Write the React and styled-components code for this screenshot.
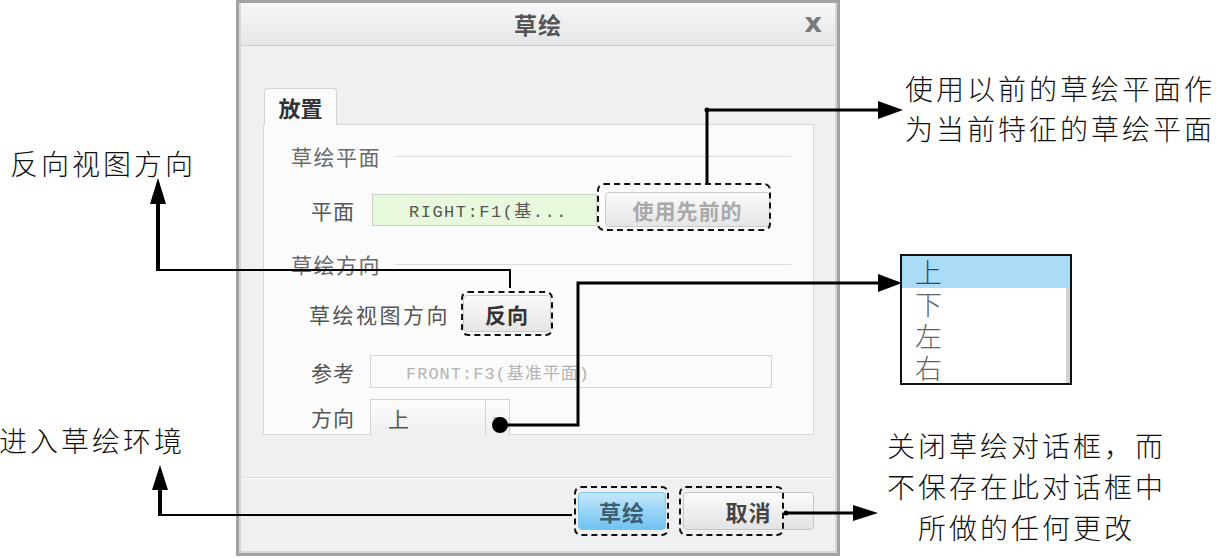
import React from 'react'
import styled, { createGlobalStyle } from 'styled-components'

const Global = createGlobalStyle`
  html, body {
    margin: 0;
    padding: 0;
    background: #ffffff;
  }
  #root {
    width: 1216px;
    height: 558px;
    overflow: hidden;
  }
`

const SANS = `"Noto Sans CJK SC", "Noto Sans", sans-serif`
const MONO = `"Liberation Mono", "Noto Sans CJK SC", monospace`

export default function App() {
  return (
    <>
      <Global />
      <Canvas>
        <Dialog>
          <TitleBar>
            <span />
            <Title>草绘</Title>
            <Close>x</Close>
          </TitleBar>
          <Body>
            <Tab>放置</Tab>
            <Panel>
              <SectionHead>草绘平面</SectionHead>
              <FieldRow $mt={24}>
                <FieldLabel>平面</FieldLabel>
                <PlaneInput>RIGHT:F1(基...</PlaneInput>
                <Button $w={165} $h={35} $muted $ml={8}>
                  使用先前的
                  <Mark $t={-10} $l={-9} $r={-2} $b={-5} />
                </Button>
              </FieldRow>
              <SectionHead $mt={25}>草绘方向</SectionHead>
              <FieldRow $mt={19} $pl={18}>
                <PlainLabel>草绘视图方向</PlainLabel>
                <Button $w={88} $h={37} $ml={13}>
                  反向
                  <Mark $t={-5} $l={-3} $r={-3} $b={-5} />
                </Button>
              </FieldRow>
              <FieldRow $mt={23}>
                <FieldLabel>参考</FieldLabel>
                <RefInput>FRONT:F3(基准平面)</RefInput>
              </FieldRow>
              <FieldRow $mt={11}>
                <FieldLabel>方向</FieldLabel>
                <Select>
                  <SelectValue>上</SelectValue>
                  <SelectArrow>
                    <svg width="10" height="8" viewBox="0 0 10 8">
                      <path d="M0 0 H10 L5 7 Z" fill="#a9a9a9" />
                    </svg>
                  </SelectArrow>
                </Select>
              </FieldRow>
            </Panel>
          </Body>
          <Footer>
            <FooterButton $primary $w={88}>
              草绘
              <Mark $t={-7} $l={-5} $r={-4} $b={-7} />
            </FooterButton>
            <FooterButton $w={131}>
              取消
              <Mark $t={-7} $l={-5} $r={29} $b={-7} />
            </FooterButton>
          </Footer>
        </Dialog>

        <Note $left={905} $top={68}>
          使用以前的草绘平面作<br />为当前特征的草绘平面
        </Note>
        <Note $left={10} $top={143}>反向视图方向</Note>
        <Note $left={-1} $top={420}>进入草绘环境</Note>
        <Note $left={884} $top={425} $w={285} $center $lh={41}>
          关闭草绘对话框，而<br />不保存在此对话框中<br />所做的任何更改
        </Note>

        <ListInset>
          <ListItem $active>上</ListItem>
          <ListItem>下</ListItem>
          <ListItem>左</ListItem>
          <ListItem>右</ListItem>
        </ListInset>

        <Arrows width="1216" height="558" viewBox="0 0 1216 558">
          {/* 使用先前的 -> note */}
          <polyline points="707,183 707,110 882,110" fill="none" stroke="#000" strokeWidth="3" />
          <circle cx="707" cy="110" r="2.5" fill="#000" />
          <polygon points="878,101 903,110 878,119" fill="#000" />

          {/* 反向 -> note */}
          <polyline points="510,288 510,270 158,270" fill="none" stroke="#000" strokeWidth="2" />
          <line x1="158" y1="271" x2="158" y2="200" stroke="#000" strokeWidth="4" />
          <polygon points="150,204 158,178 166,204" fill="#000" />

          {/* dropdown -> list */}
          <circle cx="500" cy="425" r="8" fill="#000" />
          <polyline points="500,425 578,425 578,283 882,283" fill="none" stroke="#000" strokeWidth="3" />
          <polygon points="878,274 902,283 878,292" fill="#000" />

          {/* 草绘 -> note */}
          <polyline points="572,515 160,515" fill="none" stroke="#000" strokeWidth="2" />
          <line x1="160" y1="516" x2="160" y2="486" stroke="#000" strokeWidth="4" />
          <polygon points="152,490 160,465 168,490" fill="#000" />

          {/* 取消 -> note */}
          <line x1="785" y1="513" x2="858" y2="513" stroke="#000" strokeWidth="3" />
          <circle cx="786" cy="513" r="2.5" fill="#000" />
          <polygon points="853,505 878,513 853,521" fill="#000" />
        </Arrows>
      </Canvas>
    </>
  )
}

const Canvas = styled.div`
  position: relative;
  width: 1216px;
  height: 558px;
  overflow: hidden;
  background: #ffffff;
  font-family: ${SANS};
`

const Dialog = styled.div`
  margin-left: 236px;
  width: 604px;
  height: 556px;
  box-sizing: border-box;
  border: 3px solid #a2a2a2;
  box-shadow: inset 0 0 0 2px #d7d7d7;
  background: #eef0f2;
  display: flex;
  flex-direction: column;
`

const TitleBar = styled.div`
  height: 42px;
  flex-shrink: 0;
  display: grid;
  grid-template-columns: 1fr auto 1fr;
  align-items: center;
  background: linear-gradient(#f6f7f8, #e5e6e8);
  border-bottom: 1px solid #cdd0d3;
  margin: 0 2px;
`

const Title = styled.div`
  font-size: 23px;
  font-weight: bold;
  color: #555;
  letter-spacing: 1px;
`

const Close = styled.div`
  justify-self: end;
  margin-right: 13px;
  font-family: "DejaVu Sans", sans-serif;
  font-weight: bold;
  font-size: 27px;
  color: #7a7a7a;
  line-height: 1;
  margin-top: -4px;
`

const Body = styled.div`
  padding: 42px 23px 0 24px;
  display: flex;
  flex-direction: column;
  align-items: flex-start;
`

const Tab = styled.div`
  position: relative;
  z-index: 1;
  margin-left: 1px;
  margin-bottom: -1px;
  width: 73px;
  height: 37px;
  box-sizing: border-box;
  display: flex;
  align-items: center;
  justify-content: center;
  background: #fbfbfb;
  border: 1px solid #d0d2d4;
  border-bottom: none;
  border-radius: 4px 4px 0 0;
  font-size: 22px;
  font-weight: bold;
  color: #333;
`

const Panel = styled.div`
  align-self: stretch;
  height: 311px;
  box-sizing: border-box;
  background: #fbfbfb;
  border: 1px solid #d6d8da;
  padding: 19px 22px 0 27px;
  display: flex;
  flex-direction: column;
`

const SectionHead = styled.div`
  margin-top: ${p => p.$mt || 0}px;
  height: 24px;
  display: flex;
  align-items: center;
  font-size: 21px;
  color: #6a6a6a;
  letter-spacing: 1.5px;
  &::after {
    content: '';
    flex: 1;
    height: 1px;
    background: #dcdcdc;
    margin-left: 14px;
  }
`

const FieldRow = styled.div`
  margin-top: ${p => p.$mt || 0}px;
  padding-left: ${p => p.$pl || 0}px;
  display: flex;
  align-items: center;
`

const FieldLabel = styled.div`
  width: 64px;
  margin-right: 15px;
  text-align: right;
  font-size: 21px;
  letter-spacing: 1px;
  color: #555;
`

const PlainLabel = styled.div`
  font-size: 21px;
  letter-spacing: 2.5px;
  color: #555;
`

const PlaneInput = styled.div`
  margin-left: 2px;
  width: 225px;
  height: 32px;
  box-sizing: border-box;
  background: #e8f8dd;
  border: 1px solid #c9d0c4;
  padding-left: 36px;
  display: flex;
  align-items: center;
  font-family: ${MONO};
  font-size: 17px;
  letter-spacing: 1.5px;
  color: #555;
  white-space: nowrap;
  overflow: hidden;
`

const RefInput = styled.div`
  width: 402px;
  height: 33px;
  box-sizing: border-box;
  background: #fbfbfb;
  border: 1px solid #d3d5d7;
  padding-left: 35px;
  display: flex;
  align-items: center;
  font-family: ${MONO};
  font-size: 17px;
  letter-spacing: 1px;
  color: #b3b3b3;
  white-space: nowrap;
`

const Select = styled.div`
  width: 140px;
  height: 36px;
  box-sizing: border-box;
  display: flex;
  background: linear-gradient(#fdfdfd, #eeeeee);
  border: 1px solid #d2d2d2;
  border-bottom: none;
`

const SelectValue = styled.div`
  flex: 1;
  padding-left: 17px;
  display: flex;
  align-items: center;
  font-size: 21px;
  color: #555;
`

const SelectArrow = styled.div`
  width: 23px;
  border-left: 1px solid #d2d2d2;
  display: flex;
  align-items: center;
  justify-content: center;
  padding-top: 6px;
`

const Button = styled.div`
  position: relative;
  margin-left: ${p => p.$ml || 0}px;
  width: ${p => p.$w}px;
  height: ${p => p.$h}px;
  box-sizing: border-box;
  display: flex;
  align-items: center;
  justify-content: center;
  background: linear-gradient(#fafafa, #e6e6e6);
  border: 1px solid #c9c9c9;
  border-radius: 4px;
  font-size: 21px;
  font-weight: bold;
  letter-spacing: 1px;
  color: ${p => (p.$muted ? '#a9a9a9' : '#333')};
`

const Mark = styled.div`
  position: absolute;
  top: ${p => p.$t}px;
  left: ${p => p.$l}px;
  right: ${p => p.$r}px;
  bottom: ${p => p.$b}px;
  border: 2px dashed #111;
  border-radius: 7px;
  pointer-events: none;
`

const Footer = styled.div`
  margin-top: 42px;
  margin-left: 2px;
  margin-right: 2px;
  border-top: 1px solid #d9dbdd;
  box-shadow: inset 0 1px 0 #fafafa;
  flex: 1;
  display: flex;
  justify-content: flex-end;
  align-items: flex-start;
  gap: 17px;
  padding: 14px 21px 0 0;
`

const FooterButton = styled.div`
  position: relative;
  width: ${p => p.$w}px;
  height: 38px;
  box-sizing: border-box;
  display: flex;
  align-items: center;
  justify-content: center;
  border-radius: 4px;
  border: 1px solid ${p => (p.$primary ? '#7cc6ee' : '#c6c6c6')};
  background: ${p =>
    p.$primary
      ? 'linear-gradient(#c4e8fb, #6fc2f1)'
      : 'linear-gradient(#fbfbfb, #e3e3e3)'};
  font-size: 22px;
  font-weight: bold;
  letter-spacing: 1px;
  color: ${p => (p.$primary ? '#3d5d72' : '#444')};
`

const Note = styled.div`
  position: absolute;
  left: ${p => p.$left}px;
  top: ${p => p.$top}px;
  width: ${p => (p.$w ? `${p.$w}px` : 'auto')};
  text-align: ${p => (p.$center ? 'center' : 'left')};
  font-family: ${SANS};
  font-weight: 300;
  font-size: 28px;
  line-height: ${p => p.$lh || 40}px;
  letter-spacing: 3px;
  color: #111;
  white-space: nowrap;
`

const ListInset = styled.div`
  position: absolute;
  left: 900px;
  top: 254px;
  width: 172px;
  height: 131px;
  box-sizing: border-box;
  border: 2px solid #111;
  background: #fff;
  overflow: hidden;
  box-shadow: inset -4px 0 0 #d4d4d4;
`

const ListItem = styled.div`
  height: 32px;
  line-height: 32px;
  padding-left: 13px;
  font-size: 27px;
  font-weight: 300;
  color: ${p => (p.$active ? '#2d4a5c' : '#666')};
  background: ${p => (p.$active ? '#aadcf8' : 'transparent')};
`

const Arrows = styled.svg`
  position: absolute;
  left: 0;
  top: 0;
  pointer-events: none;
`
